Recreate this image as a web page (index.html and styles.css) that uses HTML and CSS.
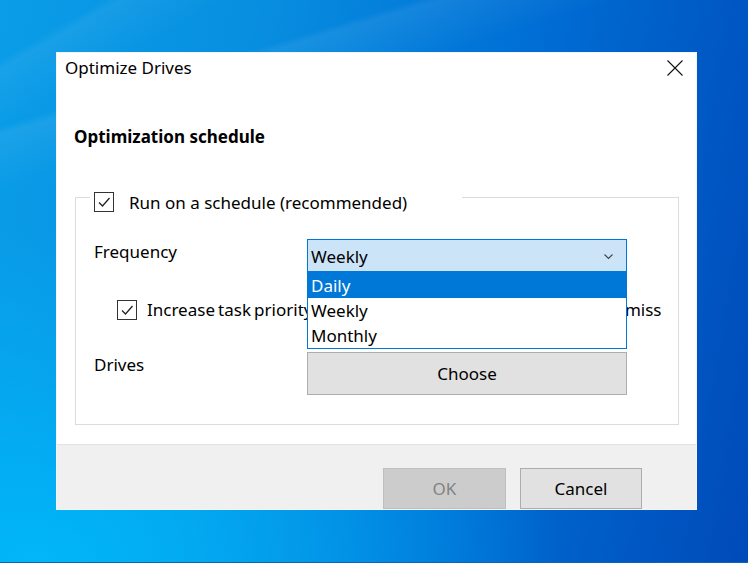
FILE: index.html
```html
<html>
    <head>
        <link rel="stylesheet" href="styles.css">
    </head>
    <body>
        <div class="dialog">
            <div class="titlebar">
                <span class="title">Optimize Drives</span>
                <svg class="close" width="16" height="16" viewBox="0 0 16 16">
                    <path d="M0.5 0.5 L15.5 15.5 M15.5 0.5 L0.5 15.5" stroke="#111" stroke-width="1.1" fill="none"/>
                </svg>
            </div>

            <div class="content">
                <div class="heading">Optimization schedule</div>

                <fieldset class="group">
                    <legend class="group-title">
                        <span class="checkbox">
                            <svg width="14" height="14" viewBox="0 0 14 14"><path d="M2 7.5 L5.5 11 L12.5 3" stroke="#222" stroke-width="1.3" fill="none"/></svg>
                        </span>
                        <span>Run on a schedule (recommended)</span>
                    </legend>

                    <div class="row row-frequency">
                        <div class="row-label">Frequency</div>
                        <div class="combo">
                            <div class="combo-value">
                                <span>Weekly</span>
                                <svg width="9" height="6" viewBox="0 0 9 6"><path d="M0.5 0.5 L4.5 4.5 L8.5 0.5" stroke="#444" stroke-width="1.1" fill="none"/></svg>
                            </div>
                            <div class="combo-list">
                                <div class="combo-item selected">Daily</div>
                                <div class="combo-item">Weekly</div>
                                <div class="combo-item">Monthly</div>
                            </div>
                        </div>
                    </div>

                    <div class="row row-option">
                        <span class="checkbox">
                            <svg width="14" height="14" viewBox="0 0 14 14"><path d="M2 7.5 L5.5 11 L12.5 3" stroke="#222" stroke-width="1.3" fill="none"/></svg>
                        </span>
                        <span class="option-text">Increase task priority if three consecutive scheduled runs are missed</span>
                    </div>

                    <div class="row row-drives">
                        <div class="row-label">Drives</div>
                        <button class="button wide">Choose</button>
                    </div>
                </fieldset>
            </div>

            <div class="footer">
                <button class="button disabled">OK</button>
                <button class="button">Cancel</button>
            </div>
        </div>
    </body>
</html>
```

FILE: styles.css
```css
html, body {
  margin: 0;
  height: 100%;
}

body {
  font-family: "Noto Sans", sans-serif;
  font-size: 17px;
  color: #000;
  overflow: hidden;
  padding: 52px 0 0 56px;
  box-sizing: border-box;
  background:
    linear-gradient(163deg, transparent 0 16%, rgba(255, 255, 255, 0.07) 17%, transparent 24%),
    linear-gradient(150deg, transparent 0 6%, rgba(255, 255, 255, 0.06) 7%, transparent 13%),
    radial-gradient(ellipse 70% 60% at 5% 100%, rgba(0, 184, 250, 0.95), rgba(0, 184, 250, 0) 100%),
    linear-gradient(100deg, #0a9de8 0%, #088fe0 30%, #0070d6 62%, #004ab9 100%);
  border-bottom: 1px solid #0b67b3;
}

.dialog {
  width: 641px;
  height: 458px;
  background: #fff;
  border: 1px solid #f4f4f4;
  box-sizing: border-box;
  display: flex;
  flex-flow: column;
}

.titlebar {
  height: 31px;
  display: flex;
  align-items: center;
  justify-content: space-between;
  padding: 0 13px 0 8px;
}

.title {
  font-size: 17px;
  margin-top: -2px;
}

.close {
  margin-top: -2px;
}

.content {
  flex-grow: 1;
  padding: 0 17px 0 17px;
}

.heading {
  margin-top: 40px;
  line-height: 26px;
  font-size: 17px;
  font-weight: bold;
}

.group {
  margin: 32px 0 0 1px;
  padding: 0 0 29px 18px;
  border: 1px solid #dcdcdc;
  min-width: 0;
}

.group-title {
  margin-left: -4px;
  padding: 10px 0 0 4px;
  width: 372px;
  height: 30px;
  box-sizing: border-box;
  display: flex;
  align-items: center;
  gap: 15px;
}

.checkbox {
  width: 20px;
  height: 20px;
  box-sizing: border-box;
  border: 1px solid #333;
  background: #fff;
  display: flex;
  align-items: center;
  justify-content: center;
  flex-shrink: 0;
}

.row {
  display: flex;
  align-items: flex-start;
}

.row-label {
  width: 213px;
  padding-top: 1px;
  line-height: 24px;
}

.row-frequency {
  margin-top: 27px;
  position: relative;
  z-index: 2;
}

.combo {
  position: relative;
  width: 320px;
}

.combo-value {
  height: 33px;
  box-sizing: border-box;
  border: 1px solid #0078d7;
  background: #cce4f7;
  display: flex;
  align-items: center;
  justify-content: space-between;
  padding: 2px 13px 0 3px;
}

.combo-list {
  position: absolute;
  top: 100%;
  left: 0;
  right: 0;
  background: #fff;
  border: 1px solid #0078d7;
}

.combo-item {
  line-height: 25px;
  height: 25px;
  padding-left: 3px;
}

.combo-item.selected {
  background: #0078d7;
  color: #fff;
  margin-top: -1px;
  height: 26px;
  line-height: 27px;
}

.row-option {
  margin-top: 27px;
  height: 22px;
  align-items: center;
  padding-left: 23px;
  gap: 10px;
}

.option-text {
  width: 515px;
  overflow: hidden;
  white-space: nowrap;
  line-height: 22px;
  word-spacing: -1.3px;
}

.row-drives {
  margin-top: 31px;
}

.button {
  font-family: "Noto Sans", sans-serif;
  font-size: 17px;
  color: #000;
  background: #e1e1e1;
  border: 1px solid #adadad;
  height: 41px;
  width: 122px;
  padding: 0;
}

.button.wide {
  width: 320px;
  height: 43px;
}

.button.disabled {
  background: #cccccc;
  border-color: #bfbfbf;
  color: #838383;
  width: 123px;
}

.footer {
  height: 65px;
  box-sizing: border-box;
  background: #f0f0f0;
  border-top: 1px solid #e2e2e2;
  display: flex;
  justify-content: flex-end;
  align-items: flex-end;
  gap: 14px;
  padding-right: 54px;
}
```
